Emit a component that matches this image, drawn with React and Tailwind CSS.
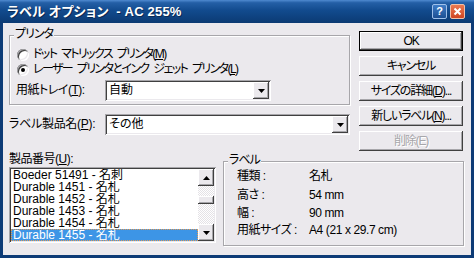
import React from "react";

const FONT = "font-['Liberation_Sans','Noto_Sans_CJK_JP',sans-serif] [font-feature-settings:'palt']";
const RAISED = "shadow-[inset_-1px_-1px_#404040,inset_1px_1px_#ffffff,inset_-2px_-2px_#a7a6aa,inset_2px_2px_#ebe9ed]";
const SUNKEN = "shadow-[inset_1px_1px_#a7a6aa,inset_-1px_-1px_#ffffff,inset_2px_2px_#404040,inset_-2px_-2px_#ebe9ed]";

const Arrow = ({ up }) => (
  <svg width="7" height="4" viewBox="0 0 7 4">
    {up ? <path d="M3.5 0 L7 4 L0 4 Z" fill="#000" /> : <path d="M0 0 L7 0 L3.5 4 Z" fill="#000" />}
  </svg>
);

const TitleBar = () => (
  <div className="h-[23px] flex items-center bg-[linear-gradient(to_bottom,#4f8ad0_0%,#245fa6_12%,#124b8e_45%,#0b3a73_100%)]">
    <span className="pl-[7px] text-white font-bold text-[13px] leading-[15px] tracking-[0.2px] whitespace-pre [text-shadow:1px_1px_#0a2a55]">
      ラベル オプション  - AC 255%
    </span>
    <div className="ml-auto mr-[9px] flex gap-[3px]">
      <div className="w-[15px] h-[15px] rounded-[2px] border border-[#9fc0ea] bg-[linear-gradient(to_bottom,#3f7cc6,#1c4f93)] flex items-center justify-center text-white font-bold text-[11px] leading-none">
        ?
      </div>
      <div className="w-[15px] h-[15px] rounded-[2px] border border-[#f0c0a8] bg-[linear-gradient(to_bottom,#ec7a52,#cf4522)] flex items-center justify-center">
        <svg width="9" height="9" viewBox="0 0 9 9">
          <path d="M1.5 1.5 L7.5 7.5 M7.5 1.5 L1.5 7.5" stroke="#fff" strokeWidth="2" />
        </svg>
      </div>
    </div>
  </div>
);

const GroupBox = ({ title, className, children }) => (
  <div className={`border border-[#a7a6aa] shadow-[inset_1px_1px_#ffffff,1px_1px_#ffffff] flex flex-col ${className}`}>
    <div className="-mt-[8px] ml-[4px] px-[1px] w-fit bg-[#ebe9ed] leading-[13px] tracking-[-1px]">{title}</div>
    {children}
  </div>
);

const Radio = ({ checked, children }) => (
  <div className="h-[15px] flex items-center pl-[7px]">
    <div className={`w-[12px] h-[12px] rounded-full bg-white flex items-center justify-center ${SUNKEN}`}>
      {checked && <div className="w-[4px] h-[4px] rounded-full bg-black" />}
    </div>
    <span className="ml-[4px] whitespace-pre tracking-[-1.6px] [word-spacing:3px]">{children}</span>
  </div>
);

const Combo = ({ value, className }) => (
  <div className={`h-[21px] bg-white flex items-center ${SUNKEN} ${className}`}>
    <span className="flex-1 pl-[4px]">{value}</span>
    <div className={`w-[16px] h-[17px] mr-[2px] bg-[#ebe9ed] flex items-center justify-center ${RAISED}`}>
      <Arrow />
    </div>
  </div>
);

const Button = ({ children, isDefault, disabled }) => (
  <div
    className={`h-[20px] flex items-center justify-center bg-[#ebe9ed] whitespace-nowrap ${
      isDefault ? "border border-black" : ""
    }`}
  >
    <div className={`w-full h-full flex items-center justify-center ${RAISED}`}>
      <span className={`tracking-[-1.2px] ${disabled ? "text-[#a7a6aa] [text-shadow:1px_1px_#ffffff]" : ""}`}>
        {children}
      </span>
    </div>
  </div>
);

const items = [
  "Boeder 51491 - 名刺",
  "Durable 1451 - 名札",
  "Durable 1452 - 名札",
  "Durable 1453 - 名札",
  "Durable 1454 - 名札",
  "Durable 1455 - 名札",
];

const details = [
  { label: "種類 :", value: "名札", mt: "mt-[3px]" },
  { label: "高さ :", value: "54 mm", mt: "mt-[6px]" },
  { label: "幅 :", value: "90 mm", mt: "mt-[5px]" },
  { label: "用紙サイズ :", value: "A4 (21 x 29.7 cm)", mt: "mt-[4px]" },
];

export default function App() {
  return (
    <div className={`w-[474px] h-[258px] flex flex-col bg-[#0d3b76] text-black text-[12px] leading-[13px] ${FONT}`}>
      <TitleBar />
      <div className="flex-1 mx-[3px] mb-[3px] bg-[#ebe9ed] flex flex-col pl-[6px]">
        <div className="flex items-start">
          <div className="w-[341px] mt-[12px] flex flex-col">
            <GroupBox title="プリンタ" className="pb-[3px]">
              <div className="mt-[6px]">
                <Radio>
                  ドット マトリックス プリンタ(<u>M</u>)
                </Radio>
                <Radio checked>
                  レーザー プリンタとインク ジェット プリンタ(<u>L</u>)
                </Radio>
              </div>
              <div className="mt-[3px] flex items-center pl-[6px]">
                <span className="w-[89px] tracking-[-0.5px]">
                  用紙トレイ(<u>T</u>):
                </span>
                <Combo value="自動" className="w-[166px]" />
              </div>
            </GroupBox>
            <div className="mt-[9px] flex items-center">
              <span className="w-[96px] tracking-[-0.3px]">
                ラベル製品名(<u>P</u>):
              </span>
              <Combo value="その他" className="flex-1" />
            </div>
          </div>
          <div className="w-[104px] ml-[9px] mt-[8px] flex flex-col gap-[5px]">
            <Button isDefault>OK</Button>
            <Button>キャンセル</Button>
            <Button>
              サイズの詳細(<u>D</u>)...
            </Button>
            <Button>
              新しいラベル(<u>N</u>)...
            </Button>
            <Button disabled>削除(E)</Button>
          </div>
        </div>

        <div className="flex items-start">
          <div className="w-[207px] flex flex-col">
            <span className="mt-[2px] tracking-[-0.5px]">
              製品番号(<u>U</u>):
            </span>
            <div className={`mt-[1px] h-[76px] bg-white p-[2px] flex ${SUNKEN}`}>
              <div className="flex-1 flex flex-col">
                {items.map((it, i) => (
                  <div
                    key={it}
                    className={`h-[12px] leading-[12px] pl-[2px] whitespace-nowrap overflow-hidden ${
                      i === items.length - 1
                        ? "bg-[#3d95e6] text-white outline outline-1 outline-dotted outline-[#e39a55] -outline-offset-1"
                        : ""
                    }`}
                  >
                    {it}
                  </div>
                ))}
              </div>
              <div className="w-[16px] flex flex-col">
                <div className={`h-[17px] bg-[#ebe9ed] flex items-center justify-center ${RAISED}`}>
                  <Arrow up />
                </div>
                <div className="flex-1 bg-[repeating-conic-gradient(#ffffff_0%_25%,#e4e2e6_0%_50%)] bg-[length:2px_2px]">
                  <div className={`mt-[10px] h-[8px] bg-[#ebe9ed] ${RAISED}`} />
                </div>
                <div className={`h-[17px] bg-[#ebe9ed] flex items-center justify-center ${RAISED}`}>
                  <Arrow />
                </div>
              </div>
            </div>
          </div>
          <GroupBox title="ラベル" className="ml-[7px] mt-[10px] w-[241px] h-[85px]">
            {details.map((d) => (
              <div key={d.label} className={`flex pl-[13px] ${d.mt}`}>
                <span className="w-[72px] whitespace-pre tracking-[-0.5px]">{d.label}</span>
                <span className="whitespace-nowrap tracking-[-0.4px]">{d.value}</span>
              </div>
            ))}
          </GroupBox>
        </div>
      </div>
    </div>
  );
}
